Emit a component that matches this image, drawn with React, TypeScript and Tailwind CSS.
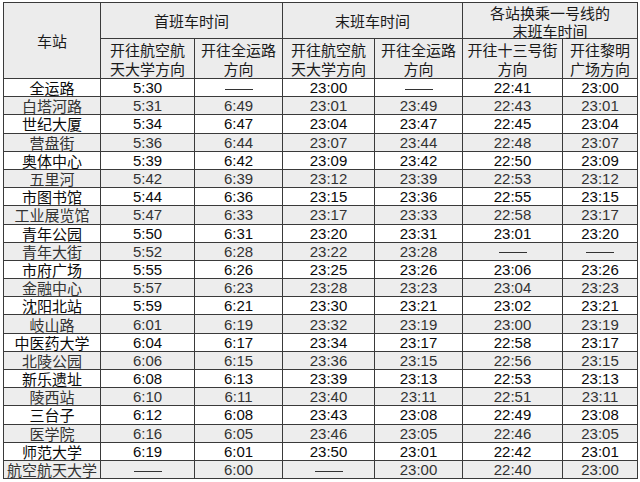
const rows: string[][] = [
  ['全运路', '5:30', '', '23:00', '', '22:41', '23:00'],
  ['白塔河路', '5:31', '6:49', '23:01', '23:49', '22:43', '23:01'],
  ['世纪大厦', '5:34', '6:47', '23:04', '23:47', '22:45', '23:04'],
  ['营盘街', '5:36', '6:44', '23:07', '23:44', '22:48', '23:07'],
  ['奥体中心', '5:39', '6:42', '23:09', '23:42', '22:50', '23:09'],
  ['五里河', '5:42', '6:39', '23:12', '23:39', '22:53', '23:12'],
  ['市图书馆', '5:44', '6:36', '23:15', '23:36', '22:55', '23:15'],
  ['工业展览馆', '5:47', '6:33', '23:17', '23:33', '22:58', '23:17'],
  ['青年公园', '5:50', '6:31', '23:20', '23:31', '23:01', '23:20'],
  ['青年大街', '5:52', '6:28', '23:22', '23:28', '', ''],
  ['市府广场', '5:55', '6:26', '23:25', '23:26', '23:06', '23:26'],
  ['金融中心', '5:57', '6:23', '23:28', '23:23', '23:04', '23:23'],
  ['沈阳北站', '5:59', '6:21', '23:30', '23:21', '23:02', '23:21'],
  ['岐山路', '6:01', '6:19', '23:32', '23:19', '23:00', '23:19'],
  ['中医药大学', '6:04', '6:17', '23:34', '23:17', '22:58', '23:17'],
  ['北陵公园', '6:06', '6:15', '23:36', '23:15', '22:56', '23:15'],
  ['新乐遗址', '6:08', '6:13', '23:39', '23:13', '22:53', '23:13'],
  ['陵西站', '6:10', '6:11', '23:40', '23:11', '22:51', '23:11'],
  ['三台子', '6:12', '6:08', '23:43', '23:08', '22:49', '23:08'],
  ['医学院', '6:16', '6:05', '23:46', '23:05', '22:46', '23:05'],
  ['师范大学', '6:19', '6:01', '23:50', '23:01', '22:42', '23:01'],
  ['航空航天大学', '', '6:00', '', '23:00', '22:40', '23:00'],
]

const cjk = { fontFamily: '"Noto Sans CJK SC", "Noto Sans", sans-serif' }
const num = { fontFamily: '"Liberation Sans", Arial, sans-serif' }

function Dash() {
  return <span className="inline-block w-[28px] h-px bg-[#333] align-middle" />
}

function Head({ children, ...rest }: { children: React.ReactNode; rowSpan?: number; colSpan?: number }) {
  return (
    <th {...rest} className="border border-[#3a3a3a] font-normal text-center p-0">
      {children}
    </th>
  )
}

export default function App() {
  return (
    <div className="w-[640px] h-[482px] bg-white pt-[2px] pl-[3px]">
      <table
        className="table-fixed border-collapse w-[634px] text-[15px] text-[#1a1a1a]"
        style={cjk}
      >
        <colgroup>
          <col className="w-[97px]" />
          <col className="w-[94px]" />
          <col className="w-[88px]" />
          <col className="w-[92px]" />
          <col className="w-[88px]" />
          <col className="w-[100px]" />
          <col className="w-[75px]" />
        </colgroup>
        <thead className="bg-[#ececec]">
          <tr className="h-[36px] leading-[18px]">
            <Head rowSpan={2}>车站</Head>
            <Head colSpan={2}>首班车时间</Head>
            <Head colSpan={2}>末班车时间</Head>
            <Head colSpan={2}>
              <div className="h-[34px] leading-[18px]">
                各站换乘一号线的
                <br />
                末班车时间
              </div>
            </Head>
          </tr>
          <tr className="h-[40px]">
            {['开往航空航|天大学方向', '开往全运路|方向', '开往航空航|天大学方向', '开往全运路|方向', '开往十三号街|方向', '开往黎明|广场方向'].map((t, i) => (
              <Head key={i}>
                <div className="h-[38px] leading-[19px]">
                  {t.split('|')[0]}
                  <br />
                  {t.split('|')[1]}
                </div>
              </Head>
            ))}
          </tr>
        </thead>
        <tbody>
          {rows.map((r, i) => (
            <tr
              key={r[0]}
              className={i % 2 === 1 ? 'h-[18.2px] bg-[#ededed] text-[#333]' : 'h-[18.2px] bg-white text-[#0a0a0a]'}
            >
              {r.map((c, j) => (
                <td
                  key={j}
                  className="border border-[#3a3a3a] text-center p-0 whitespace-nowrap"
                >
                  <div className="h-[17px] leading-[17px]" style={j === 0 ? cjk : num}>
                    {c === '' ? <Dash /> : c}
                  </div>
                </td>
              ))}
            </tr>
          ))}
        </tbody>
      </table>
    </div>
  )
}
